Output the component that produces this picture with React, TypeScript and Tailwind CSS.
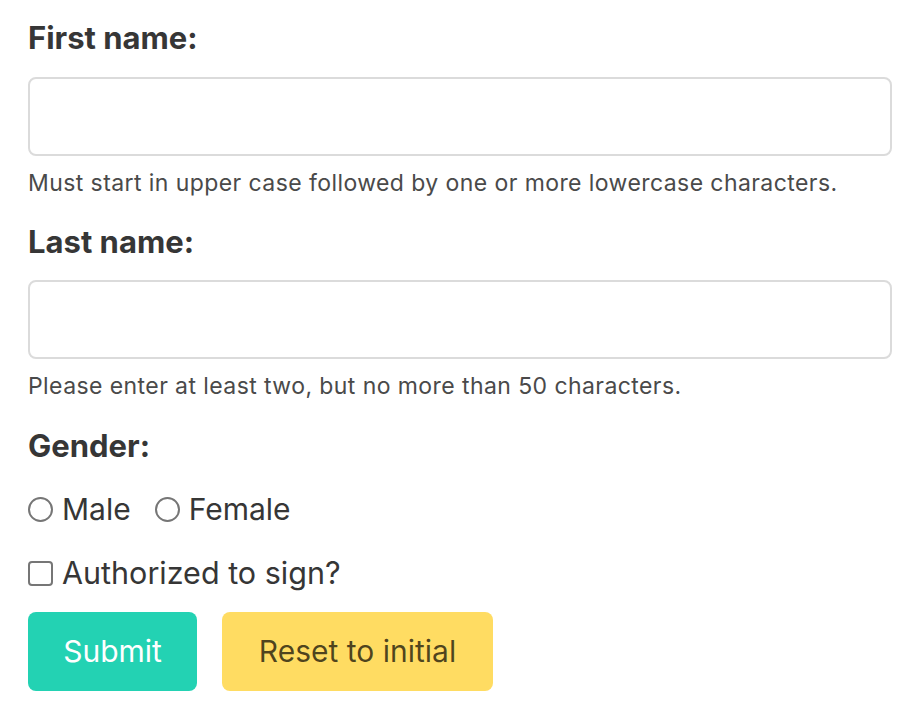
import React, { useState } from 'react';

const font = { fontFamily: 'Inter, "Liberation Sans", sans-serif' };

export default function App() {
  const [first, setFirst] = useState('');
  const [last, setLast] = useState('');
  const [gender, setGender] = useState('');
  const [auth, setAuth] = useState(false);

  return (
    <div className="bg-white w-[920px] h-[720px] px-[28px] pt-[18px] text-[#363636]" style={font}>
      <form onSubmit={(e) => e.preventDefault()} className="w-[864px]">
        <label className="block text-[31px] font-bold leading-[40px] mb-[19px]">First name:</label>
        <input
          value={first}
          onChange={(e) => setFirst(e.target.value)}
          className="block w-full h-[79px] rounded-[8px] border-[2px] border-[#dbdbdb] bg-white outline-none px-4"
        />
        <p className="text-[23px] tracking-[0.42px] text-[#4a4a4a] leading-[30px] mt-[12px] mb-[24px]">
          Must start in upper case followed by one or more lowercase characters.
        </p>

        <label className="block text-[31px] font-bold leading-[40px] mb-[18px]">Last name:</label>
        <input
          value={last}
          onChange={(e) => setLast(e.target.value)}
          className="block w-full h-[79px] rounded-[8px] border-[2px] border-[#dbdbdb] bg-white outline-none px-4"
        />
        <p className="text-[23px] tracking-[0.42px] text-[#4a4a4a] leading-[30px] mt-[12px] mb-[25px]">
          Please enter at least two, but no more than 50 characters.
        </p>

        <label className="block text-[31px] font-bold leading-[40px] mb-[23px]">Gender:</label>
        <div className="flex items-center gap-[24px] text-[30px] leading-[40px] text-[#363636]">
          {['Male', 'Female'].map((g) => (
            <label key={g} className="flex items-center gap-[9px] cursor-pointer">
              <span className="w-[25px] h-[25px] rounded-full border-[2px] border-[#767676] bg-white flex items-center justify-center">
                {gender === g && <span className="w-[13px] h-[13px] rounded-full bg-[#363636]" />}
              </span>
              <input type="radio" name="gender" className="hidden" checked={gender === g} onChange={() => setGender(g)} />
              {g}
            </label>
          ))}
        </div>

        <label className="flex items-center gap-[9px] text-[30.5px] leading-[40px] mt-[24px] cursor-pointer">
          <span className="w-[25px] h-[25px] rounded-[4px] border-[2px] border-[#767676] bg-white" />
          <input type="checkbox" className="hidden" checked={auth} onChange={(e) => setAuth(e.target.checked)} />
          Authorized to sign?
        </label>

        <div className="flex gap-[25px] mt-[19px]">
          <button type="submit" className="h-[79px] w-[169px] rounded-[8px] bg-[#23d2b3] text-white text-[30px]">
            Submit
          </button>
          <button type="button" className="h-[79px] w-[271px] rounded-[8px] bg-[#ffdc62] text-[rgba(0,0,0,0.7)] text-[30px]">
            Reset to initial
          </button>
        </div>
      </form>
    </div>
  );
}
